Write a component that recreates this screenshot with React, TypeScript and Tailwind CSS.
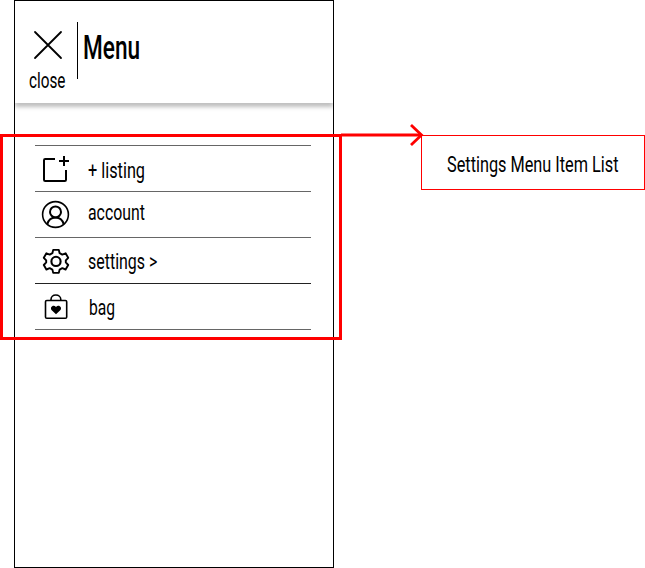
import React from "react";

const stroke = { fill: "none", stroke: "#000", strokeWidth: 1.6 } as const;

function ListingIcon() {
  return (
    <svg width="30" height="30" viewBox="0 0 30 30" {...stroke} strokeWidth={2} strokeLinejoin="round">
      <path d="M15 6H5.2Q4 6 4 7.2V26.8Q4 28 5.2 28H24.8Q26 28 26 26.8V17" />
      <path d="M24 3V13M19 8H29" />
    </svg>
  );
}

function AccountIcon() {
  return (
    <svg width="30" height="30" viewBox="0 0 30 30" {...stroke}>
      <circle cx="14.5" cy="14.5" r="12.9" />
      <circle cx="14.5" cy="11.9" r="5.5" strokeWidth="2" />
      <path d="M6.3 24.2C7.3 20 10.5 17.4 14.5 17.4S21.7 20 22.7 24.2" strokeWidth="2" />
    </svg>
  );
}

function SettingsIcon() {
  return (
    <svg width="30" height="30" viewBox="0 0 30 30" {...stroke} strokeWidth={1.9} strokeLinejoin="round">
      <path d="M12.2 3.9H17.8L18.6 7.2L21.3 8.6L24.6 7.3L27.2 11.8L24.8 14.4V16.4L27.2 19L24.6 23.5L21.3 22.2L18.6 23.6L17.8 26.9H12.2L11.4 23.6L8.7 22.2L5.4 23.5L2.8 19L5.2 16.4V14.4L2.8 11.8L5.4 7.3L8.7 8.6L11.4 7.2Z" />
      <circle cx="15" cy="15.4" r="4.6" strokeWidth="2.1" />
    </svg>
  );
}

function BagIcon() {
  return (
    <svg width="30" height="30" viewBox="0 0 30 30" {...stroke}>
      <rect x="4.5" y="8.5" width="21.2" height="17.8" rx="1.3" />
      <path d="M10 8.5V7.5C10 4.8 12 3 14.8 3S19.8 4.8 19.8 7.5V8.5" />
      <path d="M15 22.2L11 18.6C8 15.6 12.3 11.9 15 14.9C17.7 11.9 22 15.6 19 18.6Z" fill="#000" stroke="none" />
    </svg>
  );
}

const label = "block w-max origin-left whitespace-nowrap";

const rows = [
  { text: "+ listing", icon: <ListingIcon />, iconPos: "pt-[7px] pl-[5px]", textPos: "pt-[11px] pl-[18px]", scale: "scale-x-[0.74]", line: "border-[#666]" },
  { text: "account", icon: <AccountIcon />, iconPos: "pt-2 pl-[6px]", textPos: "pt-[7px] pl-[17px]", scale: "scale-x-[0.72]", line: "border-[#666]" },
  { text: "settings >", icon: <SettingsIcon />, iconPos: "pt-2 pl-[6px]", textPos: "pt-[10px] pl-[17px]", scale: "scale-x-[0.725]", line: "border-[#222]" },
  { text: "bag", icon: <BagIcon />, iconPos: "pt-2 pl-[6px]", textPos: "pt-[10px] pl-[18px]", scale: "scale-x-[0.71]", line: "border-[#666]" },
];

export default function App() {
  return (
    <div className="relative flex h-[568px] w-[645px] items-start overflow-hidden bg-white font-['Roboto',sans-serif] font-[450] text-black">
      <main className="ml-[14px] h-[568px] w-[320px] shrink-0 overflow-hidden border border-black">
        <header className="flex h-[102px] items-start bg-white shadow-[0_4px_4px_rgba(0,0,0,0.25)]">
          <button className="w-[62px] pt-[29px] text-left">
            <svg className="ml-[18px] block" width="30" height="30" viewBox="0 0 30 30" stroke="#000" strokeWidth="1.8" strokeLinecap="round">
              <path d="M2 2L28 28M28 2L2 28" />
            </svg>
            <span className={`${label} ml-[14px] mt-[7px] text-[22px] font-[450] leading-7 scale-x-[0.695]`}>close</span>
          </button>
          <div className="mt-[21px] h-[57px] w-px bg-black" />
          <h1 className={`${label} ml-[5px] mt-[26px] text-[34px] font-medium leading-10 scale-x-[0.665]`}>Menu</h1>
        </header>
        <ul className="ml-5 mt-[42px] w-[276px] border-t border-[#666]">
          {rows.map((r) => (
            <li key={r.text} className={`flex h-[46px] border-b ${r.line}`}>
              <div className={`shrink-0 ${r.iconPos}`}>{r.icon}</div>
              <div className={r.textPos}>
                <span className={`${label} text-[22px] leading-7 ${r.scale}`}>{r.text}</span>
              </div>
            </li>
          ))}
        </ul>
      </main>
      <aside className="ml-[87px] mt-[135px] h-[55px] w-[224px] shrink-0 border border-[#f00] pl-[25px] pt-[15px]">
        <span className={`${label} text-[22px] leading-7 scale-x-[0.74]`}>Settings Menu Item List</span>
      </aside>
      <div className="absolute left-0 top-[134px] h-[206px] w-[342px] border-[3px] border-[#f00]" />
      <svg className="absolute left-[341px] top-[122px]" width="84" height="26" viewBox="0 0 84 26" fill="none" stroke="#f00">
        <path d="M0 13H80" strokeWidth="3" />
        <path d="M70 3L80.5 13L70 23" strokeWidth="2.8" />
      </svg>
    </div>
  );
}
